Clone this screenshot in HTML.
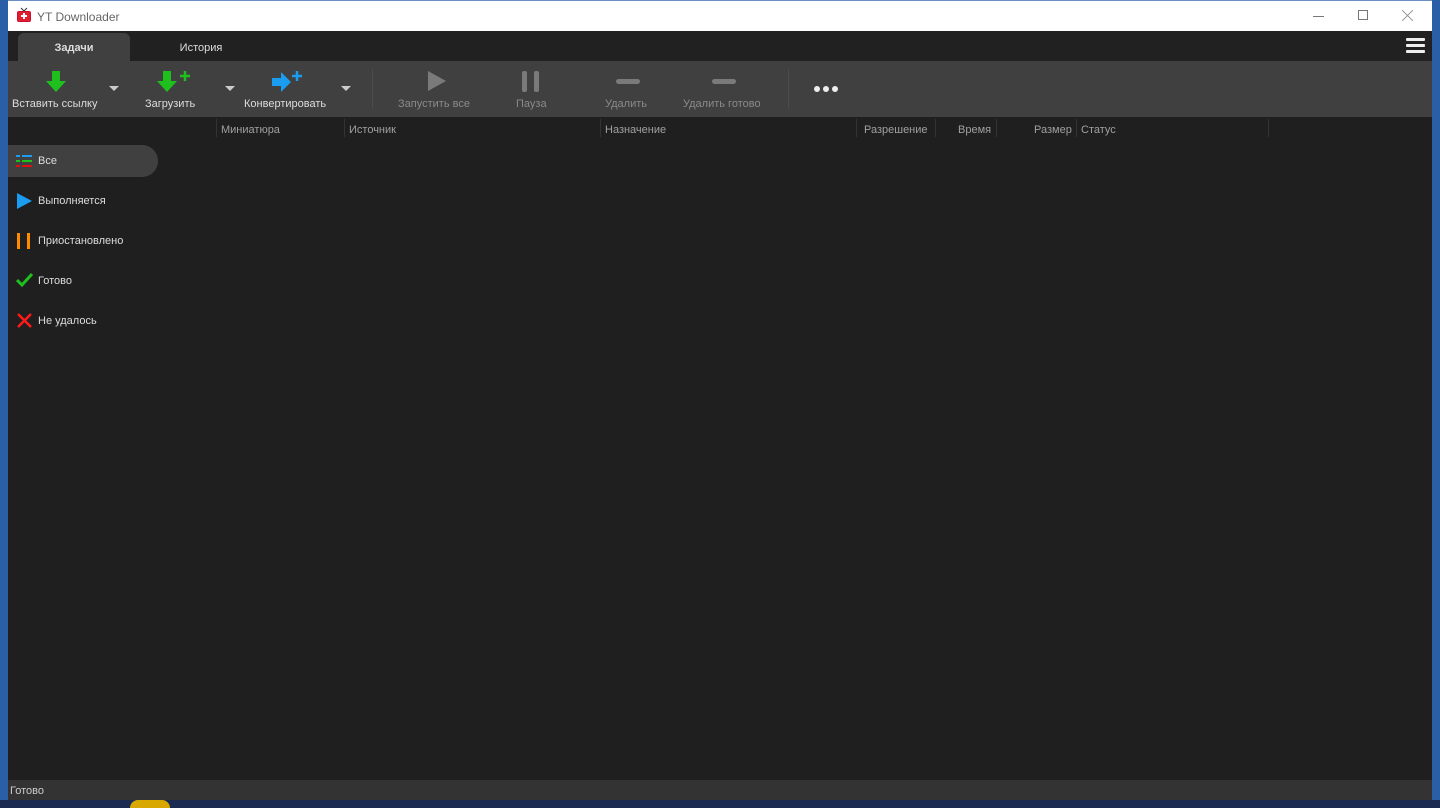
<!DOCTYPE html>
<html><head><meta charset="utf-8"><style>
*{margin:0;padding:0;box-sizing:border-box}
body{width:1440px;height:808px;overflow:hidden;background:#2a5fa8;font-family:"Liberation Sans",sans-serif;font-size:11px;position:relative}
.abs{position:absolute}
#win{position:absolute;left:8px;top:0;width:1424px;height:800px;background:#1f1f1f}
#title{position:absolute;left:0;top:0;width:1424px;height:31px;background:#fff;border-top:1px solid #6b8fc4}
#tabs{position:absolute;left:0;top:31px;width:1424px;height:30px;background:#212121}
.tab{position:absolute;top:2px;height:28px;line-height:30px;text-align:center;color:#ddd;font-size:11px}
#tb{position:absolute;left:0;top:61px;width:1424px;height:56px;background:#404040}
.btn{position:absolute;top:36px;color:#ddd;font-size:11px;white-space:nowrap}
.dis{color:#8a8a8a}
.hdr{position:absolute;top:124px;color:#a0a0a0;font-size:11px}
.sep{position:absolute;top:119px;width:1px;height:18px;background:#333}
.side{position:absolute;left:38px;color:#ddd;font-size:11px}
.caret{position:absolute;top:86px;width:0;height:0;border-left:5px solid transparent;border-right:5px solid transparent;border-top:5px solid #ccc}
</style></head><body>
<div class="abs" style="left:0;top:800px;width:1440px;height:8px;background:#1a2a50"></div>
<div class="abs" style="left:130px;top:800px;width:40px;height:8px;background:#d8a800;border-radius:20px 20px 0 0"></div>
<div id="win">
<div id="title">
 <svg class="abs" style="left:8px;top:6px" width="16" height="16" viewBox="0 0 16 16"><path d="M5 1l3 3 3-3" stroke="#333" fill="none"/><rect x="1" y="4" width="14" height="11" rx="2" fill="#c8102e"/><rect x="2" y="5" width="12" height="9" rx="1" fill="#e02030"/><path d="M8 6v6M5 9h6" stroke="#fff" stroke-width="2"/></svg>
 <div class="abs" style="left:29px;top:9px;color:#666;font-size:12px">YT Downloader</div>
 <div class="abs" style="left:1305px;top:15px;width:11px;height:1px;background:#777"></div>
 <div class="abs" style="left:1350px;top:9px;width:10px;height:10px;border:1px solid #777"></div>
 <svg class="abs" style="left:1394px;top:9px" width="11" height="11"><path d="M0 0L11 11M11 0L0 11" stroke="#888" stroke-width="0.8"/></svg>
</div>
<div id="tabs">
 <div class="tab" style="left:10px;width:112px;background:#404040;border-radius:6px 6px 0 0;font-weight:bold">Задачи</div>
 <div class="tab" style="left:138px;width:110px">История</div>
 <div class="abs" style="left:1398px;top:7px;width:19px;height:3px;background:#eee;border-radius:1px"></div>
 <div class="abs" style="left:1398px;top:13px;width:19px;height:3px;background:#eee;border-radius:1px"></div>
 <div class="abs" style="left:1398px;top:19px;width:19px;height:3px;background:#eee;border-radius:1px"></div>
</div>
<div id="tb">
 <svg class="abs" style="left:38px;top:10px" width="20" height="22"><path d="M6 0h8v10h6L10 21 0 10h6z" fill="#1ec01e"/></svg>
 <div class="btn" style="left:4px;top:37px">Вставить ссылку</div>
 <svg class="abs" style="left:149px;top:10px" width="34" height="22"><path d="M6 0h8v10h6L10 21 0 10h6z" fill="#1ec01e"/><path d="M23 5h10M28 0v10" stroke="#1ec01e" stroke-width="2.5"/></svg>
 <div class="btn" style="left:137px;top:37px">Загрузить</div>
 <svg class="abs" style="left:264px;top:10px" width="34" height="22"><path d="M0 7h9V1l10 10-10 10v-6H0z" fill="#1a9cf0"/><path d="M20 5h10M25 0v10" stroke="#1a9cf0" stroke-width="2.5"/></svg>
 <div class="btn" style="left:236px;top:37px">Конвертировать</div>
 <div class="abs" style="left:364px;top:8px;width:1px;height:40px;background:#4c4c4c"></div>
 <svg class="abs" style="left:419px;top:9px" width="20" height="22"><path d="M1 1l18 10L1 21z" fill="#7a7a7a"/></svg>
 <div class="btn dis" style="left:390px;top:37px">Запустить все</div>
 <div class="abs" style="left:514px;top:10px;width:5px;height:21px;background:#7a7a7a;border-radius:2px"></div>
 <div class="abs" style="left:526px;top:10px;width:5px;height:21px;background:#7a7a7a;border-radius:2px"></div>
 <div class="btn dis" style="left:508px;top:37px">Пауза</div>
 <div class="abs" style="left:608px;top:18px;width:24px;height:5px;background:#7a7a7a;border-radius:3px"></div>
 <div class="btn dis" style="left:597px;top:37px">Удалить</div>
 <div class="abs" style="left:704px;top:18px;width:24px;height:5px;background:#7a7a7a;border-radius:3px"></div>
 <div class="btn dis" style="left:675px;top:37px">Удалить готово</div>
 <div class="abs" style="left:780px;top:8px;width:1px;height:40px;background:#4c4c4c"></div>
 <div class="abs" style="left:806px;top:25px;width:6px;height:6px;background:#eee;border-radius:3px"></div>
 <div class="abs" style="left:815px;top:25px;width:6px;height:6px;background:#eee;border-radius:3px"></div>
 <div class="abs" style="left:824px;top:25px;width:6px;height:6px;background:#eee;border-radius:3px"></div>
</div>
<div class="caret" style="left:101px;top:86px"></div>
<div class="caret" style="left:217px;top:86px"></div>
<div class="caret" style="left:333px;top:86px"></div>
<div class="sep" style="left:208px"></div><div class="hdr" style="left:213px">Миниатюра</div>
<div class="sep" style="left:336px"></div><div class="hdr" style="left:341px">Источник</div>
<div class="sep" style="left:592px"></div><div class="hdr" style="left:597px">Назначение</div>
<div class="sep" style="left:848px"></div><div class="hdr" style="left:856px">Разрешение</div>
<div class="sep" style="left:927px"></div><div class="hdr" style="left:950px">Время</div>
<div class="sep" style="left:988px"></div><div class="hdr" style="left:1026px">Размер</div>
<div class="sep" style="left:1068px"></div><div class="hdr" style="left:1073px">Статус</div>
<div class="sep" style="left:1260px"></div>
<div class="abs" style="left:0;top:145px;width:150px;height:32px;background:#404040;border-radius:0 16px 16px 0"></div>
<svg class="abs" style="left:8px;top:155px" width="16" height="12"><path d="M0 1h4M6 1h10" stroke="#1a9cf0" stroke-width="2"/><path d="M0 6h4M6 6h10" stroke="#1ec01e" stroke-width="2"/><path d="M0 11h4M6 11h10" stroke="#e01010" stroke-width="2"/></svg>
<div class="side" style="left:30px;top:155px">Все</div>
<svg class="abs" style="left:9px;top:193px" width="16" height="16"><path d="M0 0l15 8L0 16z" fill="#1a9cf0"/></svg>
<div class="side" style="left:30px;top:195px">Выполняется</div>
<div class="abs" style="left:9px;top:233px;width:3px;height:16px;background:#ff8c00"></div>
<div class="abs" style="left:19px;top:233px;width:3px;height:16px;background:#ff8c00"></div>
<div class="side" style="left:30px;top:235px">Приостановлено</div>
<svg class="abs" style="left:8px;top:273px" width="17" height="15"><path d="M1 7l5 5L16 1" stroke="#1ec01e" stroke-width="3" fill="none"/></svg>
<div class="side" style="left:30px;top:275px">Готово</div>
<svg class="abs" style="left:9px;top:313px" width="15" height="15"><path d="M1 1l13 13M14 1L1 14" stroke="#ff1a1a" stroke-width="2.5"/></svg>
<div class="side" style="left:30px;top:315px">Не удалось</div>
<div class="abs" style="left:0;top:780px;width:1424px;height:20px;background:#333"></div>
<div class="abs" style="left:2px;top:785px;color:#ccc;font-size:11px">Готово</div>
</div>
</body></html>
